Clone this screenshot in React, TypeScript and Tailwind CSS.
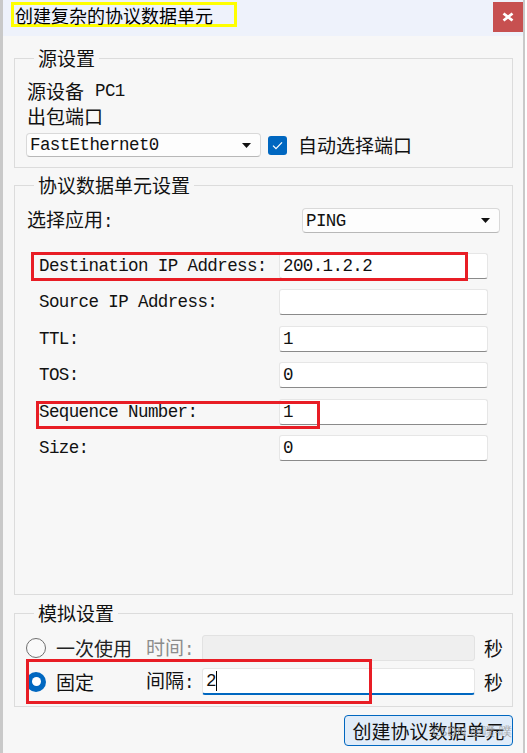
import React from "react";

const zh = "font-['Noto_Sans_CJK_SC',sans-serif] text-[19px] leading-[24px]";
const mono = "font-['Liberation_Mono','Noto_Sans_CJK_SC',monospace] text-[17.5px] tracking-[-0.6px] leading-[24px]";

function Arrow() {
  return (
    <svg width="9" height="5" viewBox="0 0 9 5" className="shrink-0">
      <path d="M0 0h9L4.5 5z" fill="#111" />
    </svg>
  );
}

function Select({ value, w }: { value: string; w: string }) {
  return (
    <div
      className={`${w} h-full flex items-center justify-between bg-[#fdfdfd] border border-[#d9d9d9] border-b-[#b8b8b8] rounded-[4px] pl-[3px] pr-[9px]`}
    >
      <span className={`${mono} text-[#111]`}>{value}</span>
      <Arrow />
    </div>
  );
}

function Field({ value }: { value?: string }) {
  return (
    <div className="w-[209px] h-[26px] bg-white border border-[#e6e6e6] border-b-[#8a8a8a] rounded-[3px] pl-[3px] flex items-center">
      <span className={`${mono} text-[#111]`}>{value}</span>
    </div>
  );
}

function Row({ label, value, box }: { label: string; value?: string; box?: string }) {
  return (
    <div className="relative flex items-center justify-between h-[26px] pl-[13px] pr-[24px]">
      <span className={`${mono} text-[#111]`}>{label}</span>
      <Field value={value} />
      {box && <div className={`absolute border-[3px] border-[#e81d25] ${box}`} />}
    </div>
  );
}

export default function App() {
  const rows = [
    { label: "Destination IP Address:", value: "200.1.2.2", box: "left-[5px] top-[-1px] w-[437px] h-[29px]" },
    { label: "Source IP Address:", value: "" },
    { label: "TTL:", value: "1" },
    { label: "TOS:", value: "0" },
    { label: "Sequence Number:", value: "1", box: "left-[10px] top-[2px] w-[284px] h-[28px]" },
    { label: "Size:", value: "0" },
  ];

  return (
    <div className="w-[527px] h-[753px] bg-white overflow-hidden">
      <div className="w-[525px] h-[753px] border-l-[3px] border-r-2 border-[#c9c9c9] bg-[#f7f7f7] flex flex-col text-[#111]">
        {/* title bar */}
        <div className="h-[36px] shrink-0 bg-[#eef2fb] flex items-start justify-between">
          <div className="ml-[8px] mt-[2px] h-[25px] w-[226px] border-[3px] border-[#ffff00] pl-[1px] flex items-center">
            <span className="font-['Noto_Sans_CJK_SC',sans-serif] text-[18px] leading-none text-black">
              创建复杂的协议数据单元
            </span>
          </div>
          <div className="mt-[2px] w-[30px] h-[30px] bg-[#c75050] flex items-center justify-center">
            <svg width="12" height="10" viewBox="0 0 12 10">
              <path d="M1.5 1.5l9 7M10.5 1.5l-9 7" stroke="#fff" strokeWidth="2.8" />
            </svg>
          </div>
        </div>

        {/* 源设置 */}
        <fieldset className="mt-[10px] ml-[11px] mr-[10px] border border-[#dcdcdc] pl-[11px] pr-[12px] pb-[10px]">
          <legend className={`${zh} ml-[8px] px-[4px]`}>源设置</legend>
          <div className="pt-[9px]">
            <div className="h-[24px] flex items-center pl-[1px]">
              <span className={zh}>源设备</span>
              <span className={`${mono} ml-[11px]`}>PC1</span>
            </div>
            <div className="h-[25px] flex items-center pl-[1px]">
              <span className={zh}>出包端口</span>
            </div>
            <div className="mt-[5px] h-[24px] flex items-center">
              <Select value="FastEthernet0" w="w-[235px]" />
              <div className="ml-[7px] w-[19px] h-[19px] rounded-[3px] bg-[#0067c0] flex items-center justify-center">
                <svg width="11" height="9" viewBox="0 0 11 9">
                  <path d="M1 4.6l3 3L10 1.4" stroke="#fff" strokeWidth="1.3" fill="none" />
                </svg>
              </div>
              <span className={`${zh} ml-[11px]`}>自动选择端口</span>
            </div>
          </div>
        </fieldset>

        {/* 协议数据单元设置 */}
        <fieldset className="mt-[5px] ml-[11px] mr-[10px] h-[422px] border border-[#dcdcdc] pl-[11px]">
          <legend className={`${zh} ml-[8px] px-[4px]`}>协议数据单元设置</legend>
          <div className="mt-[11px] h-[25px] flex items-center justify-between pl-[1px] pr-[12px]">
            <span className={zh}>
              选择应用<span className={mono}>:</span>
            </span>
            <Select value="PING" w="w-[198px]" />
          </div>
          <div className="mt-[20px] flex flex-col gap-[10.4px]">
            {rows.map((r) => (
              <Row key={r.label} label={r.label} value={r.value} box={r.box} />
            ))}
          </div>
        </fieldset>

        {/* 模拟设置 */}
        <fieldset className="mt-[6px] ml-[11px] mr-[10px] border border-[#dcdcdc] pl-[11px] pb-[11px]">
          <legend className={`${zh} ml-[8px] px-[4px]`}>模拟设置</legend>
          <div className="mt-[10px] h-[26px] flex items-center">
            <div className="w-[120px] flex items-center">
              <div className="w-[20px] h-[20px] rounded-full border border-[#6f6f6f] bg-[#f9f9f9]" />
              <span className={`${zh} ml-[10px] text-[#222]`}>一次使用</span>
            </div>
            <span className={`${zh} w-[56px] text-[#8c8c8c]`}>
              时间<span className={mono}>:</span>
            </span>
            <div className="w-[273px] h-[26px] bg-[#efefef] border border-[#e2e2e2] rounded-[3px]" />
            <span className={`${zh} ml-[9px]`}>秒</span>
          </div>
          <div className="relative mt-[7px] h-[27px] flex items-center">
            <div className="w-[120px] flex items-center">
              <div className="w-[20px] h-[20px] rounded-full bg-[#0067c0] flex items-center justify-center">
                <div className="w-[9px] h-[9px] rounded-full bg-white" />
              </div>
              <span className={`${zh} ml-[10px]`}>固定</span>
            </div>
            <span className={`${zh} w-[56px]`}>
              间隔<span className={mono}>:</span>
            </span>
            <div className="w-[273px] h-[27px] bg-white border border-[#e6e6e6] border-b-2 border-b-[#0067c0] rounded-[3px] pl-[3px] flex items-center">
              <span className={mono}>2</span>
              <span className="w-px h-[20px] bg-black" />
            </div>
            <span className={`${zh} ml-[9px]`}>秒</span>
            <div className="absolute left-0 top-[-9px] w-[346px] h-[45px] border-[3px] border-[#e81d25]" />
          </div>
        </fieldset>

        <div className="mt-[8px] mr-[10px] flex justify-end">
          <div className="relative">
            <button className="w-[169px] h-[31px] bg-[#e0ecf9] border border-[#0067c0] rounded-[4px] flex items-center justify-center">
              <span className={zh}>创建协议数据单元</span>
            </button>
            <span className="absolute left-[88px] top-[10px] font-['Noto_Sans',sans-serif] text-[13px] leading-none text-[#9a9a9a]/80 whitespace-nowrap">
              CSDN @噗-噗
            </span>
          </div>
        </div>
      </div>
    </div>
  );
}
